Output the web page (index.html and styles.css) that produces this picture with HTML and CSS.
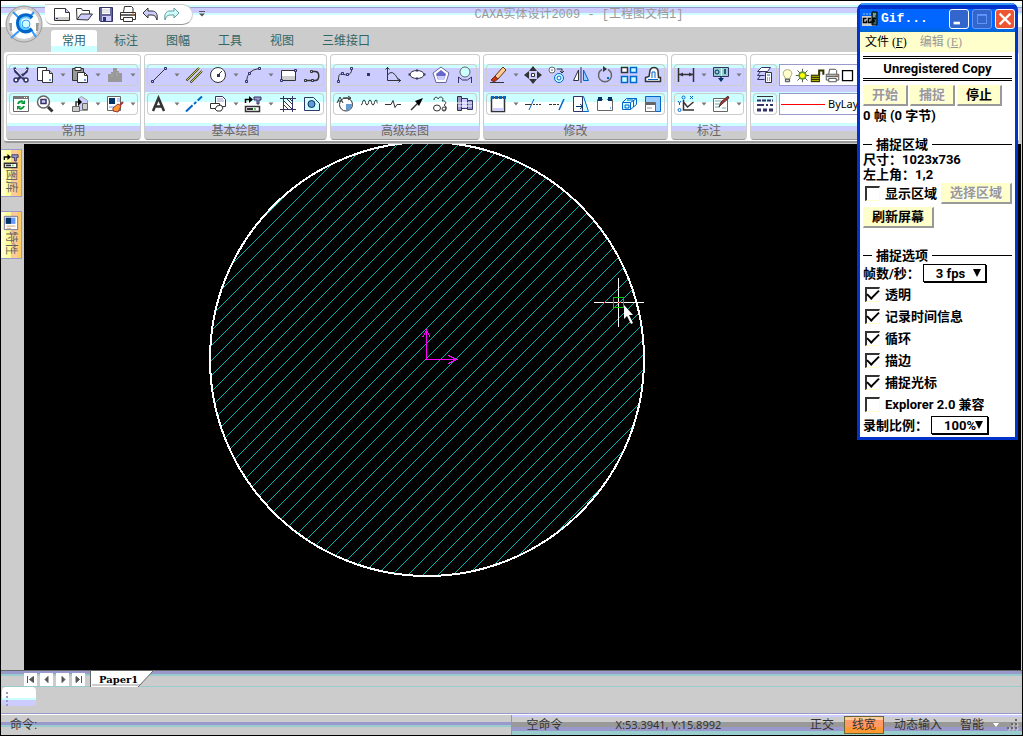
FILE: index.html
```html
<!DOCTYPE html>
<html lang="zh-CN">
<head>
<meta charset="utf-8">
<meta name="viewport" content="width=device-width, initial-scale=1">
<title>CAXA实体设计2009 - [工程图文档1]</title>
<link rel="stylesheet" href="styles.css">
</head>
<body>
<svg class="sprite" aria-hidden="true">
  <symbol id="new" viewBox="0 0 18 18"><path d="M1.500 3.500h11l4 4v8h-15z" fill="#fff" stroke="#333"/><path d="M12.500 3.500v4h4" fill="#ccf" stroke="#333"/><path d="M2 12h14v3H2z" fill="#ccc"/><path d="M3 13h2v1H3z" fill="#339"/></symbol>
  <symbol id="open" viewBox="0 0 18 18"><path d="M2 14.500l-.5-11h5l1 2h7v4" fill="#fff" stroke="#333"/><path d="M2 14.500l4-5.500h11.500l-4.500 6z" fill="#ccf" stroke="#333"/></symbol>
  <symbol id="save" viewBox="0 0 18 18"><path d="M2.500 2.500h13v14h-12l-1-1z" fill="#669" stroke="#336"/><path d="M5 3h8v6H5z" fill="#fff"/><path d="M5 5h8M5 7h8" stroke="#ccc"/><path d="M5 11h9v5H5z" fill="#ccf"/><path d="M6 12h3v4H6z" fill="#336"/></symbol>
  <symbol id="print" viewBox="0 0 18 18"><path d="M4.500 7l1-5.500h7l1.500 1.500v4" fill="#fff" stroke="#333"/><path d="M1.500 7.500h15v7h-15z" fill="#fff" stroke="#333"/><path d="M2 10h14" stroke="#666" stroke-width="2"/><path d="M4.500 12.500h9v4h-9z" fill="#fff" stroke="#333"/><path d="M13 9h2" stroke="#f60"/></symbol>
  <symbol id="undo" viewBox="0 0 18 18"><path d="M2 8l5-5v3h4c4 0 6 3 5 9-1-3-2-5-5-5H7v3z" fill="#ccf" stroke="#333"/></symbol>
  <symbol id="redo" viewBox="0 0 18 18"><path d="M16 8l-5-5v3H7c-4 0-6 3-5 9 1-3 2-5 5-5h4v3z" fill="#cff" stroke="#699"/></symbol>
  <symbol id="more" viewBox="0 0 8 8"><path d="M1 1h6v1H1zM1 3.500h6l-3 3z" fill="#555"/></symbol>
  <symbol id="drop" viewBox="0 0 6 4"><path d="M.5.500h5l-2.500 3z" fill="#777"/></symbol>

  <symbol id="cut" viewBox="0 0 18 18"><path d="M2.500 1.500l1 4 9 8M15.500 1.500l-1 4-9 8" fill="none" stroke="#336" stroke-width="2.500"/><path d="M3 3l8 8.500M15 3l-4 4.500" stroke="#fff"/><circle cx="4" cy="14" r="2" fill="#fff" stroke="#336" stroke-width="1.500"/><circle cx="14" cy="14" r="2" fill="#fff" stroke="#336" stroke-width="1.500"/></symbol>
  <symbol id="copy" viewBox="0 0 18 18"><path d="M1.500 1.500h9v13h-9z" fill="#fff" stroke="#333"/><path d="M6.500 4.500h7l3 3v9h-10z" fill="#fff" stroke="#333"/><path d="M13.500 4.500v3h3" fill="#ccc" stroke="#333"/><path d="M13 13h2v2h-2z" fill="#69f"/></symbol>
  <symbol id="paste" viewBox="0 0 18 18"><path d="M1.500 2.500h11v12h-11z" fill="#999" stroke="#333"/><path d="M4 1.500h6v3H4z" fill="#fff" stroke="#333"/><path d="M6.500 6.500h7l3 3v7h-10z" fill="#fff" stroke="#333"/><path d="M13.500 6.500v3h3" fill="none" stroke="#333"/><path d="M13 13h2v2h-2z" fill="#69f"/></symbol>
  <symbol id="mass" viewBox="0 0 18 18"><path d="M2 8h3V6h2V2h4v3h2v2h3v9H2z" fill="#999"/><path d="M6 8v3M11 6v4" stroke="#aaa"/></symbol>
  <symbol id="refresh" viewBox="0 0 18 18"><path d="M1.500 1.500h15v15h-15z" fill="#fff" stroke="#666"/><path d="M1 1h16v3H1z" fill="#777"/><path d="M12 2.500h4" stroke="#fff" stroke-dasharray="1 1"/><path d="M6 9c1-3 4-3 5-2M12 11c-1 3-4 3-5 2" fill="none" stroke="#093" stroke-width="2"/><path d="M13 5v4H9zM5 15v-4h4z" fill="#093"/></symbol>
  <symbol id="zoom" viewBox="0 0 18 18"><circle cx="7.500" cy="7" r="6" fill="#fff" stroke="#666" stroke-width="1.500"/><path d="M5 4.500h5v4H5z" fill="#ccf" stroke="#336" stroke-width="1.500"/><path d="M12 12l4.500 4.500" stroke="#333" stroke-width="3"/></symbol>
  <symbol id="insert" viewBox="0 0 18 18"><path d="M7.500 3.500l3-2 6 4v10h-9z" fill="#ccf" stroke="#999"/><path d="M11.500 8.500h5v6h-5z" fill="#ccc" stroke="#666"/><path d="M1.500 11.500h7v5h-7z" fill="#ccc" stroke="#666"/><path d="M5 11V7h4" fill="none" stroke="#333" stroke-width="1.500"/><path d="M7 3l4 4-4 4z" fill="#000"/></symbol>
  <symbol id="match" viewBox="0 0 18 18"><path d="M1.500 1.500h13v14h-13z" fill="#fff" stroke="#666"/><path d="M3 3h6v6H3z" fill="#036"/><path d="M11 4h3M11 6h3M3 12h5" stroke="#69f"/><path d="M7 13l5-4 3 2-3 6-5-1z" fill="#f93" stroke="#933"/><path d="M14 10l3-3" stroke="#933" stroke-width="2"/></symbol>

  <symbol id="line" viewBox="0 0 18 18"><path d="M2.500 15.500l13-13" stroke="#333"/><path d="M1.500 14.500h2v2h-2zM14.500 1.500h2v2h-2z" fill="#ccf" stroke="#336"/></symbol>
  <symbol id="parallel" viewBox="0 0 18 18"><path d="M1.500 14.500L14 2M5.500 16.500L17 5" stroke="#440" stroke-width="2"/><path d="M2 14L14 2M6 16L17 5" stroke="#cc6"/></symbol>
  <symbol id="circle" viewBox="0 0 18 18"><circle cx="9" cy="9" r="7.500" fill="#fff" stroke="#333"/><path d="M8 8h3v3H8z" fill="#336"/><path d="M9 9l4-4" stroke="#333"/></symbol>
  <symbol id="arc" viewBox="0 0 18 18"><path d="M2.500 15.500Q3 4 15 2.500" fill="none" stroke="#333"/><path d="M1.500 14.500h2v2h-2zM4.500 6.500h2v2h-2zM14.500 1.500h2v2h-2z" fill="#ccf" stroke="#336"/></symbol>
  <symbol id="rect" viewBox="0 0 18 18"><path d="M2.500 4.500h14v10h-14z" fill="#fff" stroke="#333"/><path d="M3 10h13v4H3z" fill="#ccc"/><path d="M1.500 13.500h2v2h-2zM15.500 3.500h2v2h-2z" fill="#ccf" stroke="#336"/></symbol>
  <symbol id="poly" viewBox="0 0 18 18"><path d="M2 14.500h10c5 0 5-9 0-9H9" fill="none" stroke="#333" stroke-width="1.500"/><path d="M1.500 13.500h2v2h-2zM8.500 13.500h2v2h-2zM7.500 4.500h2v2h-2z" fill="#ccf" stroke="#333"/></symbol>
  <symbol id="text" viewBox="0 0 18 18"><path d="M3 16L8.500 3 14 16M5 11.500h7" fill="none" stroke="#333" stroke-width="2.500"/></symbol>
  <symbol id="center" viewBox="0 0 18 18"><path d="M1 16.500L17 1.500" stroke="#06c" stroke-width="2" stroke-dasharray="9 2 3 2"/></symbol>
  <symbol id="block" viewBox="0 0 18 18"><path d="M6.500 1.500h7l3 3v7h-10z" fill="#fff" stroke="#336"/><path d="M8 4h6M8 6h7" stroke="#99c"/><path d="M1.500 8.500h9v5h-9z" fill="#fff" stroke="#333"/><path d="M8 11l4-1 2 3-2 3H8l-2-2z" fill="#fff" stroke="#333"/></symbol>
  <symbol id="library" viewBox="0 0 18 18"><path d="M1.500 8V4.500H7" fill="none" stroke="#000" stroke-width="1.500"/><path d="M5 1l4 3.500L5 8z" fill="#000"/><path d="M10 2h7v3h-2v4h-2V5h-3z" fill="#99c" stroke="#336"/><path d="M1.500 11.500h14v5h-14z" fill="#fff" stroke="#333" stroke-width="1.500"/><path d="M3 14h6" stroke="#333" stroke-width="2"/><path d="M10 14h2" stroke="#6c6" stroke-width="2"/></symbol>
  <symbol id="hatch" viewBox="0 0 18 18"><path d="M1 3.500h16M1 14.500h16M4.500 1v16M13.500 1v16" stroke="#336"/><path d="M5 6l8 8M5 10l4 4M8 4l5 5M11 4l2 2" stroke="#333"/></symbol>
  <symbol id="detail" viewBox="0 0 18 18"><path d="M1.500 2.500h9l6 6v7h-15z" fill="#cff" stroke="#336"/><circle cx="8.500" cy="9" r="3.500" fill="#69c" stroke="#036"/></symbol>

  <symbol id="spline" viewBox="0 0 18 18"><path d="M2.500 15Q2 7 6 8t5 1q5-1 4.500-6" fill="none" stroke="#333"/><path d="M1.500 14.500h2v2h-2zM5.500 6.500h2v2h-2zM10.500 7.500h2v2h-2zM14.500 1.500h2v2h-2z" fill="#ccf" stroke="#336"/></symbol>
  <symbol id="point" viewBox="0 0 18 18"><path d="M7 7h3v3H7z" fill="#336"/></symbol>
  <symbol id="formula" viewBox="0 0 18 18"><path d="M3.500 1v13.500H17M1.500 3.500l2-2 2 2M14.500 12.500l2 2-2 2M3.500 9q5-7 11 5" fill="none" stroke="#333"/></symbol>
  <symbol id="ellipse" viewBox="0 0 18 18"><ellipse cx="9" cy="8.500" rx="7" ry="4" fill="#fff" stroke="#333"/><path d="M.5 7.500h2v2h-2zM15.500 7.500h2v2h-2zM8 3.500h2v2H8zM8 11.500h2v2H8z" fill="#336"/></symbol>
  <symbol id="pentagon" viewBox="0 0 18 18"><path d="M9 1l8 6-3 9.500H4L1 7z" fill="#fff" stroke="#669"/><path d="M9 4l5 4-2 6H6L4 8z" fill="#66c"/><path d="M5 10h8l-1 4H6z" fill="#ccf"/></symbol>
  <symbol id="contour" viewBox="0 0 18 18"><circle cx="9" cy="6" r="5" fill="#cff" stroke="#666"/><path d="M2.500 17v-6l4 3h5l4-3v6" fill="none" stroke="#336"/></symbol>
  <symbol id="partial" viewBox="0 0 18 18"><circle cx="10" cy="9.500" r="6.500" fill="#fff" stroke="#333"/><path d="M10 9h6c0 5-3 7-6 6.500z" fill="#69c"/><path d="M1 8l3-6 3 6M2 6h4M7 3h7M12 1l3 2-3 2" fill="none" stroke="#333"/></symbol>
  <symbol id="wave" viewBox="0 0 18 18"><path d="M1 10c2 0 1-5 3-5s1 5 3 5 1-5 3-5 1 5 3 5 1-5 3-5 0 3 1.500 3" fill="none" stroke="#333"/></symbol>
  <symbol id="break" viewBox="0 0 18 18"><path d="M1 9.500h6l2-4 2 7 2-3h4" fill="none" stroke="#333"/></symbol>
  <symbol id="arrow" viewBox="0 0 18 18"><path d="M3 15L12 6" stroke="#333" stroke-width="1.500"/><path d="M15 3L7 6l4 5z" fill="#000"/></symbol>
  <symbol id="cloud" viewBox="0 0 18 18"><path d="M2 5c0-4 4-3 4-1 2-4 7-1 4 2 4-1 5 3 2 4 4 2 2 6-1 5" fill="none" stroke="#333"/><ellipse cx="5" cy="13" rx="3.500" ry="3" fill="#fff" stroke="#333"/><circle cx="12" cy="14" r="2" fill="none" stroke="#333"/></symbol>
  <symbol id="shaft" viewBox="0 0 18 18"><path d="M1.500 1.500h4v14h-4z" fill="#99c" stroke="#333"/><path d="M5.500 3.500h6v10h-6z" fill="#ccf" stroke="#336"/><path d="M11.500 5.500h5v9h-5z" fill="#99c" stroke="#336"/><path d="M1 8h15M2 11h14" stroke="#fff"/></symbol>

  <symbol id="erase" viewBox="0 0 18 18"><path d="M6 10l8-9 3 3-8 9z" fill="#fc9" stroke="#630"/><path d="M2 14l4-4 3 3-4 3z" fill="#c30" stroke="#633"/><path d="M1 16.500h14" stroke="#333"/></symbol>
  <symbol id="move" viewBox="0 0 18 18"><path d="M9 0l4 5H5zM9 18l4-5H5zM0 9l5-4v8zM18 9l-5-4v8z" fill="#333"/><path d="M7.500 7.500h3v3h-3z" fill="#fff" stroke="#333"/></symbol>
  <symbol id="copyshift" viewBox="0 0 18 18"><circle cx="4" cy="4" r="3" fill="#fff" stroke="#666"/><circle cx="4" cy="4" r="1" fill="#999"/><path d="M9 3h5v3M12 5l2 2 2-2" fill="none" stroke="#333"/><circle cx="11" cy="12" r="4.500" fill="#cff" stroke="#06c"/><circle cx="11" cy="12" r="2" fill="#fff" stroke="#06c"/></symbol>
  <symbol id="mirror" viewBox="0 0 18 18"><path d="M6.500 4v10.500h-5z" fill="#fff" stroke="#333"/><path d="M11.500 4v10.500h5z" fill="#9cf" stroke="#06c"/><path d="M9 1v16" stroke="#336"/></symbol>
  <symbol id="rotate" viewBox="0 0 18 18"><path d="M6 3.500a6.500 6.500 0 1 0 6 0" fill="none" stroke="#666" stroke-width="1.500"/><path d="M7 0l4 3-4 3z" fill="#333"/><path d="M11 11h2v2h-2z" fill="#06c"/></symbol>
  <symbol id="array" viewBox="0 0 18 18"><path d="M1.500 1.500h6v5h-6z" fill="#fff" stroke="#333" stroke-width="1.500"/><path d="M10.500 1.500h6v5h-6zM1.500 10.500h6v6h-6zM10.500 10.500h6v6h-6z" fill="#cff" stroke="#06c" stroke-width="1.500"/></symbol>
  <symbol id="offset" viewBox="0 0 18 18"><path d="M1.500 15.500v-4l3.500-1 1-6c1-4 7-4 8 0l.5 7h2v4z" fill="#fff" stroke="#333" stroke-width="1.500"/><path d="M4 13.500h10M8 12V6h3v6" fill="none" stroke="#06c"/></symbol>
  <symbol id="stretch" viewBox="0 0 18 18"><path d="M2.500 2.500h13v14h-13z" fill="#fff" stroke="#333" stroke-width="1.500"/><path d="M2 2.500h15" stroke="#06c" stroke-width="3" stroke-dasharray="3 1"/><path d="M4 13h11v3H4z" fill="#ccf"/></symbol>
  <symbol id="trim" viewBox="0 0 18 18"><path d="M1 9.500h6" stroke="#333"/><path d="M5 15L10 4" stroke="#06c"/><path d="M9 9.500h8" stroke="#333" stroke-dasharray="2 1"/></symbol>
  <symbol id="extend" viewBox="0 0 18 18"><path d="M1 9.500h10" stroke="#333" stroke-dasharray="3 1"/><path d="M11 15l5-11" stroke="#06c" stroke-width="1.500"/></symbol>
  <symbol id="scale" viewBox="0 0 18 18"><path d="M6.500 1.500h5l5 15h-14z" fill="#cff" stroke="#06c"/><path d="M1.500 1.500h9v15h-9z" fill="#fff" stroke="#336"/><path d="M4 11.500h7M8 9l3 2.500L8 14" fill="none" stroke="#036"/></symbol>
  <symbol id="fillet" viewBox="0 0 18 18"><path d="M1.500 4.500h15v11h-15z" fill="#fff" stroke="#666"/><path d="M2 2h4v4H2zM12 2h4v4h-4z" fill="#036"/><path d="M7 4.500h4" stroke="#cff" stroke-width="2"/><path d="M14 13h1" stroke="#06c"/></symbol>
  <symbol id="explode" viewBox="0 0 18 18"><path d="M2.500 7.500h8v7h-8zM2.500 7.500l4-4h10l-6 4M16.500 3.500v6l-6 5M5 10h4v3H5zM7 5h6M13.500 6v6" fill="#cff" stroke="#06c"/></symbol>
  <symbol id="format" viewBox="0 0 18 18"><path d="M1.500 1.500h15v15h-15z" fill="#9cf" stroke="#06c"/><path d="M1.500 7.500h10v9h-10z" fill="#fff" stroke="#666"/><path d="M1 9h10" stroke="#666" stroke-width="2"/><path d="M3 13h5" stroke="#999"/></symbol>

  <symbol id="dim" viewBox="0 0 18 18"><path d="M1.500 2v14M16.500 2v14M2 8.500h15" stroke="#333" stroke-width="1.500"/><path d="M2 8.500l4-2v4zM16 8.500l-4-2v4z" fill="#333"/></symbol>
  <symbol id="datum" viewBox="0 0 18 18"><path d="M1.500 1.500h15v9h-15z" fill="#9cc" stroke="#336"/><path d="M9.500 2v8" stroke="#cff"/><circle cx="5" cy="6" r="2" fill="none" stroke="#036"/><path d="M13 3v5M9 10v3" stroke="#036" stroke-width="1.500"/><path d="M6 12h6l-3 4z" fill="#036"/></symbol>
  <symbol id="coord" viewBox="0 0 18 18"><path d="M6.500 5v10H17M6.500 7l4 5 6-5" fill="none" stroke="#333" stroke-width="1.500"/><path d="M1 6l1.500 2L4 6M2.500 8v2M13 1l3 3M16 1l-3 3" fill="none" stroke="#06c"/><circle cx="6.500" cy="2.500" r="1.500" fill="none" stroke="#06c"/><circle cx="2.500" cy="15" r="1.500" fill="none" stroke="#06c"/></symbol>
  <symbol id="edit" viewBox="0 0 18 18"><path d="M1.500 3.500h14v13h-14z" fill="#fff" stroke="#666"/><path d="M3 6h9M3 9h5M3 12h5M10 13h4" stroke="#6aa"/><path d="M7 12l2-5 7-6 1 2-7 6z" fill="#933" stroke="#633"/></symbol>
  <symbol id="layers" viewBox="0 0 18 18"><path d="M1.500 5.500l4-4h9l-3 4zM1.500 9.500l3-4M1.500 9.500h7M1.500 13.500l3-4M1.500 13.500h7" fill="#fff" stroke="#336"/><path d="M9.500 6.500h6v10h-6z" fill="#fff" stroke="#333"/><path d="M11 9h3M11 12h1M13 12h1M11 14h1M13 14h1" stroke="#06c"/></symbol>
  <symbol id="ltypes" viewBox="0 0 18 18"><path d="M1 1.500h16" stroke="#333"/><path d="M1 5.500h16" stroke="#336" stroke-width="2" stroke-dasharray="4 1"/><path d="M1 10h16" stroke="#336" stroke-width="2" stroke-dasharray="7 2 2 2"/><path d="M1 15h16" stroke="#336" stroke-width="3" stroke-dasharray="4 2"/></symbol>
  <symbol id="bulb" viewBox="0 0 18 18"><path d="M6 11C2 7 4 2 9 2s7 5 3 9v2H6z" fill="#ffc" stroke="#996"/><path d="M6.500 13.500h5v3h-5z" fill="#ccc" stroke="#333"/></symbol>
  <symbol id="sun" viewBox="0 0 18 18"><path d="M9 1v16M1 9h16M3 3l12 12M15 3L3 15" stroke="#333"/><circle cx="9" cy="9" r="4" fill="#ff0" stroke="#693" stroke-width="2"/></symbol>
  <symbol id="lock" viewBox="0 0 18 18"><path d="M11 9V3h5v5" fill="none" stroke="#330" stroke-width="2.500"/><path d="M1 8h11v9H1z" fill="#330"/><path d="M2 10h9M2 12.500h9M2 15h9" stroke="#cc0"/></symbol>
  <symbol id="square" viewBox="0 0 18 18"><path d="M3 3h12v12H3z" fill="#fff" stroke="#000" stroke-width="1.500"/></symbol>
  <symbol id="props" viewBox="0 0 18 18"><path d="M1.500 1.500h15v15h-15z" fill="#fff" stroke="#669"/><path d="M3 3h6v7H3z" fill="#036"/><path d="M9 3h5v7H9z" fill="#69f"/><path d="M4 12.500h10M4 15h5" stroke="#c96"/></symbol>
</svg>

<div class="app">
  <header class="titlebar">
    <div class="quick">
      <button aria-label="新建"><svg><use href="#new"/></svg></button>
      <button aria-label="打开"><svg><use href="#open"/></svg></button>
      <button aria-label="保存"><svg><use href="#save"/></svg></button>
      <button aria-label="打印"><svg><use href="#print"/></svg></button>
      <button aria-label="撤销"><svg><use href="#undo"/></svg></button>
      <button aria-label="重做"><svg><use href="#redo"/></svg></button>
    </div>
    <button class="quick-more" aria-label="自定义"><svg><use href="#more"/></svg></button>
    <h1 class="title">CAXA实体设计2009 - [工程图文档1]</h1>
    <button class="orb" aria-label="应用程序菜单">
      <svg viewBox="0 0 38 38">
        <circle cx="19" cy="19" r="18" fill="#ccc" stroke="#999"/>
        <circle cx="19" cy="19" r="15.500" fill="#fff" stroke="#ccc"/>
        <path d="M4 18h3v8H5zM34 18h-3v8h2z" fill="#999"/>
        <path d="M8 7l7 7M29 7l-5 6M6 33l8-7M27 26l4 6" stroke="#39f" stroke-width="2"/>
        <path d="M27 13c-5-5-14-3-14 5s8 11 14 6" fill="none" stroke="#06c" stroke-width="4"/>
        <path d="M25 14c-3-3-10-2-10 4s5 7 9 5" fill="none" stroke="#6cf" stroke-width="2"/>
        <circle cx="21" cy="19" r="4" fill="#cff" stroke="#39f"/>
      </svg>
    </button>
  </header>

  <nav class="tabs" aria-label="功能区">
    <button class="tab tab-active">常用</button>
    <button class="tab">标注</button>
    <button class="tab">图幅</button>
    <button class="tab">工具</button>
    <button class="tab">视图</button>
    <button class="tab">三维接口</button>
  </nav>

  <div class="ribbon">
    <section class="panel">
      <div class="tools">
        <button class="tool" aria-label="剪切"><svg><use href="#cut"/></svg></button>
        <button class="tool" aria-label="复制"><svg><use href="#copy"/></svg></button>
        <button class="drop" aria-label="复制选项"><svg><use href="#drop"/></svg></button>
        <button class="tool" aria-label="粘贴"><svg><use href="#paste"/></svg></button>
        <button class="drop" aria-label="粘贴选项"><svg><use href="#drop"/></svg></button>
        <button class="tool" aria-label="查询"><svg><use href="#mass"/></svg></button>
        <button class="drop" aria-label="查询选项"><svg><use href="#drop"/></svg></button>
      </div>
      <div class="tools">
        <button class="tool" aria-label="刷新"><svg><use href="#refresh"/></svg></button>
        <button class="tool" aria-label="缩放"><svg><use href="#zoom"/></svg></button>
        <button class="drop" aria-label="缩放选项"><svg><use href="#drop"/></svg></button>
        <button class="tool" aria-label="插入"><svg><use href="#insert"/></svg></button>
        <button class="drop" aria-label="插入选项"><svg><use href="#drop"/></svg></button>
        <button class="tool" aria-label="特性匹配"><svg><use href="#match"/></svg></button>
        <button class="drop" aria-label="特性选项"><svg><use href="#drop"/></svg></button>
      </div>
      <h2 class="panel-name">常用</h2>
    </section>

    <section class="panel">
      <div class="tools">
        <button class="tool" aria-label="直线"><svg><use href="#line"/></svg></button>
        <button class="drop" aria-label="直线选项"><svg><use href="#drop"/></svg></button>
        <button class="tool" aria-label="平行线"><svg><use href="#parallel"/></svg></button>
        <button class="tool" aria-label="圆"><svg><use href="#circle"/></svg></button>
        <button class="drop" aria-label="圆选项"><svg><use href="#drop"/></svg></button>
        <button class="tool" aria-label="圆弧"><svg><use href="#arc"/></svg></button>
        <button class="drop" aria-label="圆弧选项"><svg><use href="#drop"/></svg></button>
        <button class="tool" aria-label="矩形"><svg><use href="#rect"/></svg></button>
        <button class="tool" aria-label="多段线"><svg><use href="#poly"/></svg></button>
      </div>
      <div class="tools">
        <button class="tool" aria-label="文字"><svg><use href="#text"/></svg></button>
        <button class="drop" aria-label="文字选项"><svg><use href="#drop"/></svg></button>
        <button class="tool" aria-label="中心线"><svg><use href="#center"/></svg></button>
        <button class="tool" aria-label="块"><svg><use href="#block"/></svg></button>
        <button class="drop" aria-label="块选项"><svg><use href="#drop"/></svg></button>
        <button class="tool" aria-label="图库"><svg><use href="#library"/></svg></button>
        <button class="drop" aria-label="图库选项"><svg><use href="#drop"/></svg></button>
        <button class="tool" aria-label="剖面线"><svg><use href="#hatch"/></svg></button>
        <button class="tool" aria-label="局部放大"><svg><use href="#detail"/></svg></button>
      </div>
      <h2 class="panel-name">基本绘图</h2>
    </section>

    <section class="panel">
      <div class="tools">
        <button class="tool" aria-label="样条"><svg><use href="#spline"/></svg></button>
        <button class="tool" aria-label="点"><svg><use href="#point"/></svg></button>
        <button class="tool" aria-label="公式曲线"><svg><use href="#formula"/></svg></button>
        <button class="tool" aria-label="椭圆"><svg><use href="#ellipse"/></svg></button>
        <button class="tool" aria-label="正多边形"><svg><use href="#pentagon"/></svg></button>
        <button class="tool" aria-label="轮廓"><svg><use href="#contour"/></svg></button>
      </div>
      <div class="tools">
        <button class="tool" aria-label="局部视图"><svg><use href="#partial"/></svg></button>
        <button class="tool" aria-label="波浪线"><svg><use href="#wave"/></svg></button>
        <button class="tool" aria-label="双折线"><svg><use href="#break"/></svg></button>
        <button class="tool" aria-label="箭头"><svg><use href="#arrow"/></svg></button>
        <button class="tool" aria-label="云线"><svg><use href="#cloud"/></svg></button>
        <button class="tool" aria-label="孔轴"><svg><use href="#shaft"/></svg></button>
      </div>
      <h2 class="panel-name">高级绘图</h2>
    </section>

    <section class="panel">
      <div class="tools">
        <button class="tool" aria-label="删除"><svg><use href="#erase"/></svg></button>
        <button class="drop" aria-label="删除选项"><svg><use href="#drop"/></svg></button>
        <button class="tool" aria-label="平移"><svg><use href="#move"/></svg></button>
        <button class="tool" aria-label="平移复制"><svg><use href="#copyshift"/></svg></button>
        <button class="tool" aria-label="镜像"><svg><use href="#mirror"/></svg></button>
        <button class="tool" aria-label="旋转"><svg><use href="#rotate"/></svg></button>
        <button class="tool" aria-label="阵列"><svg><use href="#array"/></svg></button>
        <button class="tool" aria-label="等距线"><svg><use href="#offset"/></svg></button>
      </div>
      <div class="tools">
        <button class="tool" aria-label="拉伸"><svg><use href="#stretch"/></svg></button>
        <button class="drop" aria-label="拉伸选项"><svg><use href="#drop"/></svg></button>
        <button class="tool" aria-label="裁剪"><svg><use href="#trim"/></svg></button>
        <button class="tool" aria-label="延伸"><svg><use href="#extend"/></svg></button>
        <button class="tool" aria-label="比例缩放"><svg><use href="#scale"/></svg></button>
        <button class="tool" aria-label="过渡"><svg><use href="#fillet"/></svg></button>
        <button class="tool" aria-label="分解"><svg><use href="#explode"/></svg></button>
        <button class="tool" aria-label="格式"><svg><use href="#format"/></svg></button>
      </div>
      <h2 class="panel-name">修改</h2>
    </section>

    <section class="panel">
      <div class="tools">
        <button class="tool" aria-label="尺寸"><svg><use href="#dim"/></svg></button>
        <button class="drop" aria-label="尺寸选项"><svg><use href="#drop"/></svg></button>
        <button class="tool" aria-label="形位公差"><svg><use href="#datum"/></svg></button>
        <button class="drop" aria-label="公差选项"><svg><use href="#drop"/></svg></button>
      </div>
      <div class="tools">
        <button class="tool" aria-label="坐标标注"><svg><use href="#coord"/></svg></button>
        <button class="drop" aria-label="坐标选项"><svg><use href="#drop"/></svg></button>
        <button class="tool" aria-label="标注编辑"><svg><use href="#edit"/></svg></button>
        <button class="drop" aria-label="编辑选项"><svg><use href="#drop"/></svg></button>
      </div>
      <h2 class="panel-name">标注</h2>
    </section>

    <section class="panel panel-wide">
      <div class="combo-row">
        <div class="tools"><button class="tool" aria-label="图层"><svg><use href="#layers"/></svg></button></div>
        <button class="combo" aria-label="当前图层">
          <svg><use href="#bulb"/></svg><svg><use href="#sun"/></svg><svg><use href="#lock"/></svg><svg><use href="#print"/></svg><svg><use href="#square"/></svg>
        </button>
      </div>
      <div class="combo-row">
        <div class="tools"><button class="tool" aria-label="线型"><svg><use href="#ltypes"/></svg></button></div>
        <div class="combo">
          <span class="swatch"></span>
          <select aria-label="当前线型"><option>ByLayer</option></select>
        </div>
      </div>
    </section>
  </div>

  <div class="workspace">
    <aside class="dock">
      <button class="dock-tab"><svg><use href="#library"/></svg><span>图库</span></button>
      <button class="dock-tab"><svg><use href="#props"/></svg><span>特性</span></button>
    </aside>
    <main class="canvas">
      <svg class="drawing" role="img" aria-label="带剖面线的圆">
        <defs>
          <clipPath id="disc"><circle cx="403" cy="215" r="217"/></clipPath>
        </defs>
        <g id="hatching" clip-path="url(#disc)" stroke="#0ff" stroke-width="0.700" shape-rendering="crispEdges"></g>
        <circle cx="403" cy="215" r="217" fill="none" stroke="#fff" stroke-width="2" shape-rendering="crispEdges"/>
        <g fill="none" stroke="#f0f" shape-rendering="crispEdges">
          <path d="M402.500 185.500v30h30"/>
          <path d="M398.500 193.500l4-7 4 7M424.500 211.500l8 4-8 4"/>
        </g>
        <path d="M569.500 158.500h50M594.500 134v49" stroke="#fff" shape-rendering="crispEdges"/>
        <path d="M589.500 153.500h10v10h-10z" fill="none" stroke="#0c0" shape-rendering="crispEdges"/>
        <path d="M580 158.500h1M594 158.500h1M596 158.500h1" stroke="#f00"/>
        <path d="M600 161v14l3-3 4 8 2-1-4-8h4z" fill="#fff"/>
      </svg>
    </main>
  </div>

  <div class="sheets">
    <div class="sheet-nav">
      <button aria-label="首页"><svg viewBox="0 0 13 13"><path d="M3.500 3v7M9.500 3.500v6l-4-3z" stroke="#555" fill="#555"/></svg></button>
      <button aria-label="上一页"><svg viewBox="0 0 13 13"><path d="M8 3.500L5 6.500l3 3z" fill="#555" stroke="#555"/></svg></button>
      <button aria-label="下一页"><svg viewBox="0 0 13 13"><path d="M6 3.500l3 3-3 3z" fill="#555" stroke="#555"/></svg></button>
      <button aria-label="末页"><svg viewBox="0 0 13 13"><path d="M9.500 3v7M4 3.500l3.500 3L4 9.500z" stroke="#555" fill="#555"/></svg></button>
    </div>
    <button class="sheet">
      <svg viewBox="0 0 63 17" aria-hidden="true"><path d="M0 0h63L48 16H1z" fill="#fff"/><path d="M2 13h49l-3 2H2z" fill="#ccc"/><path d="M.5 0v16M63 0L48 16" stroke="#666" fill="none"/></svg>
      <span>Paper1</span>
    </button>
  </div>

  <div class="toolstrip"><div class="grip"></div></div>

  <footer class="status">
    <label class="prompt">命令:<input type="text" aria-label="命令"></label>
    <div class="info">
      <span class="info-cmd">空命令</span>
      <span class="info-pos">X:53.3941, Y:15.8992</span>
      <div class="modes">
        <button>正交</button>
        <button class="on">线宽</button>
        <button>动态输入</button>
        <button>智能</button>
        <svg class="mode-drop" viewBox="0 0 6 4"><path d="M0 0h6L3 4z" fill="#fff"/></svg>
        <svg class="resize" viewBox="0 0 12 12"><path d="M8 0h2v2H8zM4 4h2v2H4zM8 4h2v2H8zM0 8h2v2H0zM4 8h2v2H4zM8 8h2v2H8z" fill="#666"/><path d="M10 1h1v2H9M6 5h1v2H5M10 5h1v2H9M2 9h1v2H1M6 9h1v2H5M10 9h1v2H9" fill="none" stroke="#ccc"/></svg>
      </div>
    </div>
  </footer>
</div>

<section class="dialog" role="dialog" aria-label="Gif">
  <header class="dlg-title">
    <svg class="dlg-icon" viewBox="0 0 16 16"><path d="M0 5h14v10H0z" fill="#ccc"/><path d="M10 1h5v13h-5z" fill="#366" stroke="#000"/><path d="M1 3h9" stroke="#9cc" stroke-dasharray="2 1"/><path d="M4.500 7.500H1.500v4h3v-2M9 7.500H6.500v4H9v-2M14 7.500h-3v5M11 10h2" fill="none" stroke="#000" stroke-width="1.500"/><path d="M11 3h3M11 5h2" stroke="#ccc"/></svg>
    <h2>Gif...</h2>
    <button class="win" aria-label="最小化"><svg viewBox="0 0 20 20"><path d="M4 13h7v3H4z" fill="#fff"/></svg></button>
    <button class="win win-off" aria-label="最大化"><svg viewBox="0 0 20 20"><path d="M5 5h10v10H5z" fill="none" stroke="#69f"/><path d="M5 5.500h10" stroke="#69f" stroke-width="2"/></svg></button>
    <button class="win win-close" aria-label="关闭"><svg viewBox="0 0 20 20"><path d="M4 4l12 12M16 4L4 16" stroke="#fff" stroke-width="2.500"/></svg></button>
  </header>
  <div class="dlg-menu">
    <button>文件<span class="key">(<u>F</u>)</span></button>
    <button disabled>编辑<span class="key">(<u>E</u>)</span></button>
  </div>
  <div class="dlg-body">
    <p class="banner">Unregistered Copy</p>
    <div class="btn-row">
      <button class="btn" disabled>开始</button>
      <button class="btn" disabled>捕捉</button>
      <button class="btn">停止</button>
    </div>
    <p class="line">0 帧 (0 字节)</p>
    <h3 class="sect">捕捉区域</h3>
    <p class="line">尺寸：1023x736</p>
    <p class="line">左上角：1,2</p>
    <div class="area-row">
      <label class="check"><input type="checkbox"><span>显示区域</span></label>
      <button class="btn" disabled>选择区域</button>
    </div>
    <button class="btn btn-wide">刷新屏幕</button>
    <h3 class="sect sect-late">捕捉选项</h3>
    <div class="field"><label for="fps">帧数/秒：</label><span class="pick"><select id="fps"><option>3 fps</option></select><svg viewBox="0 0 8 8"><path d="M0 0h8L4 8z"/></svg></span></div>
    <label class="check"><input type="checkbox" checked><span>透明</span></label>
    <label class="check"><input type="checkbox" checked><span>记录时间信息</span></label>
    <label class="check"><input type="checkbox" checked><span>循环</span></label>
    <label class="check"><input type="checkbox" checked><span>描边</span></label>
    <label class="check"><input type="checkbox" checked><span>捕捉光标</span></label>
    <label class="check"><input type="checkbox"><span>Explorer 2.0 兼容</span></label>
    <div class="field"><label for="ratio">录制比例：</label><span class="pick pick-tight"><select id="ratio"><option>100%</option></select><svg viewBox="0 0 8 8"><path d="M0 0h8L4 8z"/></svg></span></div>
  </div>
</section>
<script src="hatch.js"></script>
</body>
</html>
```

FILE: hatch.js
```js
// Fills the disc with 45 degree hatch lines at an even pitch.
const group = document.getElementById("hatching");
const pitch = 15.2;
const first = 373.7; // x + y of the line that meets the upper edge
for (let k = -13; k <= 36; k++) {
  const sum = Math.round(first + k * pitch);
  const line = document.createElementNS("http://www.w3.org/2000/svg", "path");
  line.setAttribute("d", `M${sum} 0L${sum - 450} 450`);
  group.append(line);
}
```

FILE: styles.css
```css
* { box-sizing: border-box; margin: 0; padding: 0; }
html, body { height: 100%; }
body {
  background: #000;
  color: #333;
  font: 12px/16px "Liberation Sans", "Noto Sans CJK SC", sans-serif;
  overflow: hidden;
}
button, select, input { font: inherit; color: inherit; background: none; border: 0; border-radius: 0; appearance: none; }
h1, h2, h3 { font-size: inherit; font-weight: normal; }
svg { display: block; }
.sprite { position: absolute; width: 0; height: 0; }

.app {
  display: flex;
  flex-direction: column;
  min-height: 100vh;
  border: 1px solid #000;
  background: #ccc;
}

/* title bar */
.titlebar {
  position: relative;
  display: flex;
  align-items: center;
  height: 26px;
  padding: 0 75px 0 44px;
  background: linear-gradient(#fff 4px, #cff 4px 6px, #99c 6px 7px, #ccf 7px 12px, #cff 12px 14px, #fff 14px);
}
.quick {
  display: flex;
  align-items: center;
  gap: 4px;
  height: 21px;
  padding: 0 11px 0 8px;
  background: #fff;
  border: 1px solid #ccc;
  border-left: 0;
  border-bottom-color: #999;
  border-radius: 0 11px 11px 8px;
}
.quick svg { width: 18px; height: 18px; }
.quick-more { padding: 0 5px; }
.quick-more svg { width: 8px; height: 8px; }
.title {
  flex: 1;
  padding-top: 2px;
  text-align: center;
  color: #999;
  font-family: "Liberation Mono", "Noto Sans CJK SC", monospace;
}
.orb { position: absolute; left: 4px; top: 4px; }
.orb svg { width: 38px; height: 38px; }

/* ribbon tabs */
.tabs { display: flex; align-items: flex-end; gap: 6px; height: 25px; padding-left: 50px; }
.tab { height: 22px; padding: 0 11px; color: #366; border-radius: 3px 3px 0 0; }
.tab-active { background: linear-gradient(#fff 16px, #cff 16px); }

/* ribbon */
.ribbon {
  display: flex;
  gap: 3px;
  margin: 0 3px 1px;
  padding: 2px 2px 1px;
  background: #fff;
  border-bottom: 2px solid #999;
  border-radius: 3px;
}
.panel {
  display: flex;
  flex-direction: column;
  gap: 7px;
  padding: 9px 2px 0;
  border: 1px solid #ccc;
  border-bottom-color: #999;
  border-radius: 4px;
  background: linear-gradient(#fff 9px, #cff 9px 13px, #ccf 13px 37px, #cff 37px 47px, #fff 47px 68px, #cff 68px 71px, #ccf 71px 76px, #ccc 76px);
}
.panel-wide { flex: 1; min-width: 0; }
.panel-name { padding-top: 1px; line-height: 16px; text-align: center; color: #666; }
.tools { display: flex; border-radius: 4px; box-shadow: inset 0 0 0 1px #ccc; }
.tool { display: grid; place-items: center; width: 24px; height: 22px; }
.tool svg { width: 18px; height: 18px; }
.drop { display: grid; place-items: center; width: 11px; height: 22px; }
.drop svg { width: 6px; height: 4px; }
.combo-row { display: flex; gap: 2px; }
.combo {
  display: flex;
  align-items: center;
  flex: 1;
  height: 22px;
  background: #fff;
  border: 1px solid #99c;
}
.combo svg { width: 15px; height: 15px; }
.combo select { flex: 1; font-family: "Noto Sans", sans-serif; font-size: 11px; color: #000; }
.swatch { width: 44px; height: 1px; margin: 0 3px 0 1px; background: #f00; }

/* drawing area */
.workspace { display: flex; flex: 1; min-height: 0; }
.dock { display: flex; flex-direction: column; gap: 14px; width: 23px; padding: 5px 0; }
.dock-tab {
  display: flex;
  flex-direction: column;
  align-items: center;
  width: 21px;
  height: 48px;
  padding-top: 3px;
  color: #666;
  border: 1px solid #99c;
  border-left: 0;
  background: linear-gradient(90deg, #ffc 5px, #ff9 5px 10px, #fc9 10px 16px, #fc6 16px);
}
.dock-tab svg { width: 16px; height: 16px; }
.dock-tab span { writing-mode: vertical-rl; text-orientation: sideways; }
.canvas { flex: 1; min-width: 0; margin-right: 1px; background: #000; }
.drawing { width: 100%; height: 100%; min-height: 440px; }

/* sheet tabs */
.sheets {
  display: flex;
  height: 17px;
  padding-left: 23px;
  gap: 5px;
  border-top: 1px solid #666;
  background: linear-gradient(#99c 3px, #9cc 3px 5px, #ccc 5px 15px, #9cc 15px);
}
.sheet-nav { display: flex; gap: 3px; padding-top: 2px; }
.sheet-nav button { width: 13px; height: 13px; background: #fff; }
.sheet-nav svg { width: 13px; height: 13px; }
.sheet { display: grid; height: 16px; }
.sheet > * { grid-area: 1 / 1; }
.sheet svg { width: 63px; height: 17px; }
.sheet span { padding-left: 9px; text-align: left; line-height: 18px; color: #000; font-family: "DejaVu Serif", serif; font-size: 10px; font-weight: bold; }

.toolstrip { height: 27px; background: #ccc; border-bottom: 1px solid #99c; }
.grip {
  width: 34px;
  height: 19px;
  margin-left: 1px;
  padding: 5px 4px;
  border-radius: 4px;
  background: linear-gradient(#fff 11px, #cff 11px 13px, #ccf 13px);
}
.grip::before { content: ""; display: block; height: 14px; border-left: 2px dotted #99c; }

/* status bar */
.status { display: flex; height: 21px; border-top: 1px solid #fff; }
.prompt, .info { display: flex; align-items: center; width: 50%; }
.prompt {
  padding-left: 9px;
  border-right: 1px solid #999;
  background: linear-gradient(#ccc 7px, #99c 7px 10px, #9cc 10px 12px, #ccc 12px);
}
.prompt input { flex: 1; min-width: 0; }
.info {
  padding: 0 3px 0 15px;
  background: linear-gradient(#ccf 2px, #ccc 2px 7px, #999 7px 12px, #99c 12px 16px, #9cc 16px);
}
.info-pos { flex: 1; padding-left: 53px; font-family: "Noto Sans", sans-serif; font-size: 11px; }
.modes { display: flex; align-items: center; }
.modes button { height: 18px; padding: 0 9px; }
.modes .on { padding: 0 7px; margin: 0 1px; border: 1px solid #663; background: linear-gradient(#fc9 3px, #f96 3px 10px, #f93 10px); }
.mode-drop { width: 6px; height: 4px; margin: 0 8px 0 0; }
.resize { width: 12px; height: 12px; }

/* capture window lying over the drawing application */
.dialog {
  position: absolute;
  top: 3px;
  right: 5px;
  width: 161px;
  color: #000;
  background: #fff;
  border: 3px solid #03c;
  border-top-width: 0;
  border-radius: 7px 7px 0 0;
  font-family: Roboto, "Noto Sans CJK SC", sans-serif;
  font-size: 13px;
  line-height: 15px;
  font-weight: bold;
}
.dlg-title {
  display: flex;
  align-items: center;
  gap: 3px;
  height: 29px;
  padding: 2px 0 0 2px;
  color: #fff;
  background: linear-gradient(#39f 2px, #03c 2px 6px, #06f 6px 24px, #06c);
  border-radius: 4px 4px 0 0;
}
.dlg-icon { width: 16px; height: 16px; }
.dlg-title h2 { flex: 1; font-family: "Liberation Mono", monospace; font-size: 13px; font-weight: bold; }
.win { width: 20px; height: 20px; border: 1px solid #fff; border-radius: 3px; background: #36c; }
.win svg { width: 18px; height: 18px; }
.win-off { border-color: #69f; background: #36c; }
.win-close { background: #e53; }
.dlg-menu { display: flex; gap: 13px; height: 20px; padding: 0 5px; background: #ffc; font-size: 12px; font-weight: normal; }
.dlg-menu button:disabled { color: #999; }
.key { margin-left: 3px; font-family: "Liberation Serif", serif; }
.dlg-body { display: flex; flex-direction: column; align-items: stretch; padding: 4px 3px 2px; }
.banner { height: 25px; line-height: 19px; text-align: center; border: double #000; border-width: 3px 0; }
.btn-row { display: flex; gap: 2px; padding: 4px 0 2px; }
.btn { height: 21px; padding: 0 8px; background: #ffc; border: solid; border-width: 1px 2px 2px 1px; border-color: #ffc #999 #999 #ffc; line-height: 16px; }
.btn:disabled { color: #999; text-shadow: 1px 1px #fff; }
.btn-wide { align-self: flex-start; margin-top: 3px; }
.line { white-space: nowrap; }
.sect { display: flex; align-items: center; gap: 4px; margin-top: 14px; font-weight: bold; }
.sect::before, .sect::after { content: ""; height: 1px; background: #000; }
.sect::before { width: 9px; }
.sect::after { flex: 1; }
.sect-late { margin-top: 20px; }
.area-row { display: flex; justify-content: space-between; margin-top: 1px; white-space: nowrap; }
.check { display: flex; align-items: center; gap: 5px; height: 22px; padding-left: 2px; white-space: nowrap; }
.area-row .check { height: 21px; }
.check input { width: 15px; height: 15px; border: solid; border-width: 2px 1px 1px 2px; border-color: #333 #ffc #ffc #333; display: grid; place-items: center; }
.check input:checked::before { content: ""; width: 10px; height: 5px; border: solid #000; border-width: 0 0 2px 2px; transform: rotate(-45deg) translate(1px, -1px); }
.field { display: flex; align-items: center; gap: 3px; height: 20px; white-space: nowrap; }
.pick { display: grid; align-items: center; width: 63px; height: 18px; border: 1px solid #000; box-shadow: 1px 1px #000; }
.pick > * { grid-area: 1 / 1; }
.pick select { padding-left: 12px; font-weight: bold; }
.pick svg { width: 8px; height: 8px; justify-self: end; margin-right: 4px; pointer-events: none; }
.pick-tight { width: 57px; }
```
